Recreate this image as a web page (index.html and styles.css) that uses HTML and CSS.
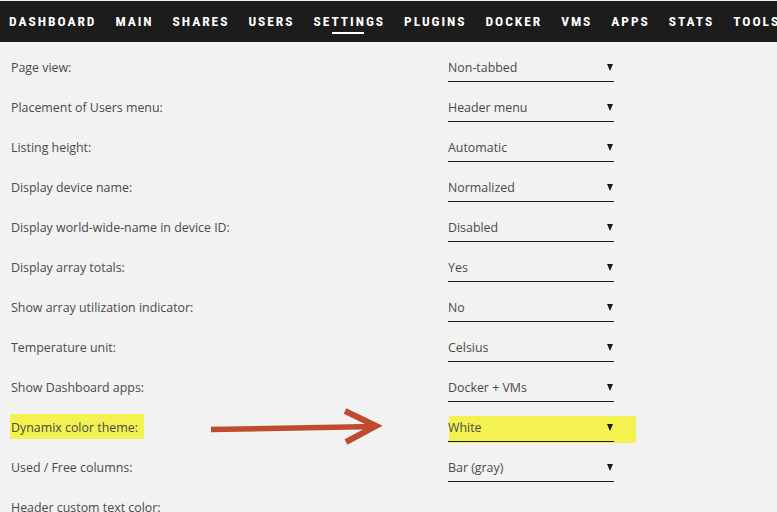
FILE: index.html
```html
<!DOCTYPE html>
<html>
<head>
<meta charset="utf-8">
<link rel="stylesheet" href="styles.css">
</head>
<body>
<nav class="nav">
  <a class="tab">DASHBOARD</a>
  <a class="tab">MAIN</a>
  <a class="tab">SHARES</a>
  <a class="tab">USERS</a>
  <a class="tab active">SETTINGS</a>
  <a class="tab">PLUGINS</a>
  <a class="tab">DOCKER</a>
  <a class="tab">VMS</a>
  <a class="tab">APPS</a>
  <a class="tab">STATS</a>
  <a class="tab">TOOLS</a>
</nav>
<main class="form">
  <div class="row"><span class="label">Page view:</span><div class="select"><span>Non-tabbed</span><i class="caret"></i></div></div>
  <div class="row"><span class="label">Placement of Users menu:</span><div class="select"><span>Header menu</span><i class="caret"></i></div></div>
  <div class="row"><span class="label">Listing height:</span><div class="select"><span>Automatic</span><i class="caret"></i></div></div>
  <div class="row"><span class="label">Display device name:</span><div class="select"><span>Normalized</span><i class="caret"></i></div></div>
  <div class="row"><span class="label">Display world-wide-name in device ID:</span><div class="select"><span>Disabled</span><i class="caret"></i></div></div>
  <div class="row"><span class="label">Display array totals:</span><div class="select"><span>Yes</span><i class="caret"></i></div></div>
  <div class="row"><span class="label">Show array utilization indicator:</span><div class="select"><span>No</span><i class="caret"></i></div></div>
  <div class="row"><span class="label">Temperature unit:</span><div class="select"><span>Celsius</span><i class="caret"></i></div></div>
  <div class="row"><span class="label">Show Dashboard apps:</span><div class="select"><span>Docker + VMs</span><i class="caret"></i></div></div>
  <div class="row marked">
    <span class="label"><span class="hl">Dynamix color theme:</span></span>
    <svg class="arrow" width="180" height="40" viewBox="0 0 180 40">
      <path d="M2 21.5 L166 18.5" stroke="#c04a30" stroke-width="5.5" fill="none"/>
      <path d="M136 3 L167 18 L137 34" stroke="#c04a30" stroke-width="6" fill="none" stroke-linejoin="miter"/>
    </svg>
    <div class="select hlsel"><span>White</span><i class="caret"></i></div>
  </div>
  <div class="row"><span class="label">Used / Free columns:</span><div class="select"><span>Bar (gray)</span><i class="caret"></i></div></div>
  <div class="row"><span class="label">Header custom text color:</span></div>
</main>
</body>
</html>
```
FILE: styles.css
```css
* { box-sizing: border-box; }
html, body { margin: 0; padding: 0; }
body {
  background: #f2f2f2;
  font-family: "Open Sans", "Noto Sans", sans-serif;
  width: 777px;
  height: 512px;
  overflow: hidden;
  padding-top: 1px;
}
.nav {
  height: 41px;
  background: #1c1c1c;
  display: flex;
  align-items: center;
  gap: 19px;
  padding-left: 9px;
  white-space: nowrap;
  overflow: hidden;
}
.tab {
  position: relative;
  color: #fff;
  font-family: "Liberation Sans Narrow", "Roboto Condensed", "Liberation Sans", sans-serif;
  font-weight: 700;
  font-size: 13.5px;
  letter-spacing: 1.95px;
  line-height: 41px;
}
.tab.active::after {
  content: "";
  position: absolute;
  left: 50%;
  bottom: 8px;
  width: 32px;
  margin-left: -17px;
  height: 2px;
  background: #fff;
}
.form {
  padding-top: 5px;
}
.row {
  position: relative;
  height: 40px;
  display: flex;
  align-items: center;
  padding-left: 11px;
}
.label {
  width: 437px;
  font-size: 12.4px;
  color: #4a4a4a;
}
.select {
  position: relative;
  width: 166px;
  height: 28px;
  margin-top: 2px;
  border-bottom: 1px solid #1a1a1a;
  display: flex;
  align-items: center;
  justify-content: space-between;
  font-size: 12.4px;
  color: #4a4a4a;
  padding-bottom: 1px;
}
.caret {
  width: 0;
  height: 0;
  border-left: 3.5px solid transparent;
  border-right: 3.5px solid transparent;
  border-top: 7px solid #1a1a1a;
  margin-right: 1px;
}
.hl {
  position: relative;
}
.hl::before {
  content: "";
  position: absolute;
  left: -1px;
  top: -5px;
  width: 134px;
  height: 25px;
  background: #f4f250;
  z-index: -1;
}
.marked { z-index: 0; }
.hlsel::before {
  content: "";
  position: absolute;
  left: 1px;
  top: 2px;
  width: 187px;
  height: 27px;
  background: #f4f250;
  z-index: -1;
}
.arrow {
  position: absolute;
  left: 209px;
  top: 1px;
}
```
